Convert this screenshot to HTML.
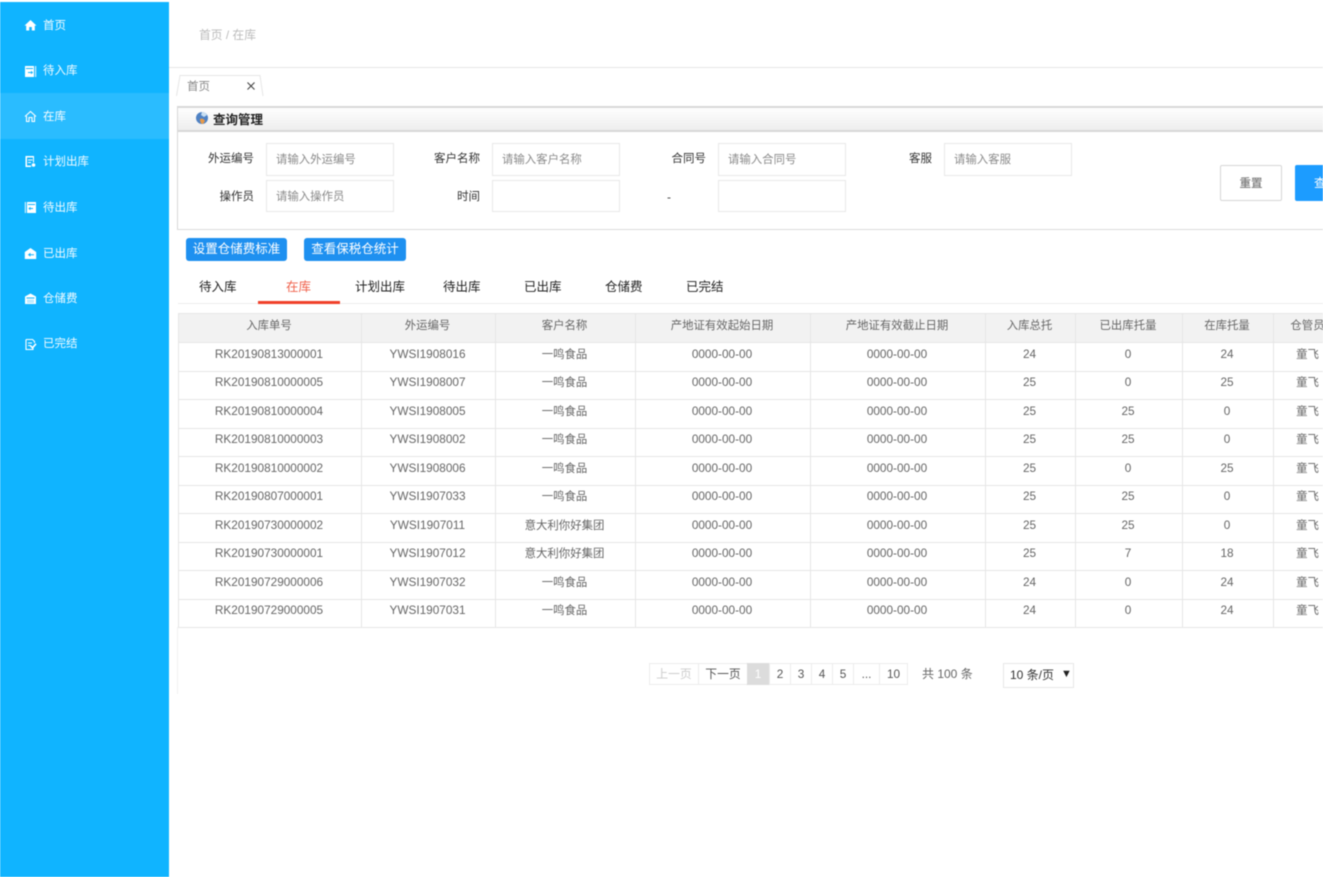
<!DOCTYPE html>
<html lang="zh">
<head>
<meta charset="utf-8">
<title>在库</title>
<style>
html,body{margin:0;padding:0;background:#fff}
body{width:1323px;height:877px;overflow:hidden;position:relative;font-family:"Liberation Sans","Noto Sans CJK SC",sans-serif;font-size:12px;color:#666}
#w{position:absolute;left:0;top:0;width:1323px;height:877px;overflow:hidden;filter:blur(.4px)}
.a{position:absolute;white-space:nowrap}
#side{position:absolute;left:0;top:2px;width:169px;height:875px;background:#10b4ff}
#act{position:absolute;left:0;top:93px;width:169px;height:46px;background:#2abcff}
.m{position:absolute;left:43px;color:#fff;font-size:11.5px;line-height:16px;opacity:.95;margin-top:1px}
.ic{position:absolute;left:24px;width:13px;height:13px}
.lab{position:absolute;color:#333;line-height:16px;text-align:right;font-size:11.5px}
.inp{position:absolute;box-sizing:border-box;width:128px;height:33px;border:1px solid #e8e8e8;color:#8a8a8a;line-height:32px;padding-left:9px;background:#fff;font-size:11.4px}
.tab{position:absolute;top:279px;color:#222;font-size:12.5px;line-height:16px}
table{position:absolute;left:178px;top:313px;border-collapse:collapse;table-layout:fixed;width:1165px;font-size:11.8px;color:#666}
td,th{border:1px solid #e6e6e6;text-align:center;font-weight:normal;overflow:hidden;white-space:nowrap;vertical-align:top;line-height:14px}
th{height:23px;padding:5px 2px 0 0;background:#f2f2f2;color:#666;font-size:11.4px}
td{height:24px;padding:3.5px 2px 0 0}
td:nth-child(3),td:nth-child(9){font-size:11.4px;padding-top:4.5px;height:23px}
.p{position:absolute;top:663px;height:22px;box-sizing:border-box;border:1px solid #ececec;text-align:center;line-height:20px;color:#555;background:#fff;font-size:11.8px}
</style>
</head>
<body>
<div id="w">
<div id="side"></div>
<div id="act"></div>

<svg class="ic" style="top:19px" viewBox="0 0 13 13"><path fill="#fff" d="M6.5 1 L12.5 6.6 L10.8 6.6 L10.8 11.5 L7.8 11.5 L7.8 8 L5.2 8 L5.2 11.5 L2.2 11.5 L2.2 6.6 L.5 6.6 Z"/></svg>
<div class="m" style="top:17px">首页</div>

<svg class="ic" style="top:65px" viewBox="0 0 13 13"><path fill="#fff" d="M1 1h9v11H1z"/><path fill="#10b4ff" d="M2 3h7v1H2zM4 7h3V5.8L9.2 7.5 7 9.2V8H4z"/><path fill="#cfefff" d="M11 1h1.2v11H11z"/></svg>
<div class="m" style="top:62px">待入库</div>

<svg class="ic" style="top:110px" viewBox="0 0 13 13"><path fill="none" stroke="#fff" stroke-width="1.1" d="M1 6.5 L6.5 1.5 L12 6.5 M2.5 6 V11.5 H5 V7.5 H8 V11.5 H10.5 V6"/></svg>
<div class="m" style="top:108px">在库</div>

<svg class="ic" style="top:155px" viewBox="0 0 13 13"><path fill="#fff" d="M1.5 1h8.5v6.5h-1V2.500H3V10.500h4V12H1.500z"/><path fill="#fff" d="M4 4.500h4.500v1H4zM4 7h3v1H4z"/><circle cx="9.500" cy="10" r="1.800" fill="#fff"/></svg>
<div class="m" style="top:153px">计划出库</div>

<svg class="ic" style="top:201px" viewBox="0 0 13 13"><path fill="#cfefff" d="M.8 1h1.200v11H.8z"/><path fill="#fff" d="M3 1h9v11H3z"/><path fill="#10b4ff" d="M4 3h7v1H4zM9 7H6.500V5.800L4.300 7.500 6.500 9.200V8H9z"/></svg>
<div class="m" style="top:199px">待出库</div>

<svg class="ic" style="top:247px" viewBox="0 0 13 13"><path fill="#fff" d="M6.500 1 L12.200 5 V12 H.8 V5 Z"/><path fill="#10b4ff" d="M10 7.200H6.500V5.800L3.800 7.700 6.500 9.600V8.200H10z"/></svg>
<div class="m" style="top:245px">已出库</div>

<svg class="ic" style="top:292px" viewBox="0 0 13 13"><path fill="#fff" d="M6.500 1.500 L12 4.500 V12 H1 V4.500 Z"/><path fill="#10b4ff" d="M2.500 5.500h8v1h-8z"/><path fill="#bfeaff" d="M3 7.500h7V11H3z"/></svg>
<div class="m" style="top:290px">仓储费</div>

<svg class="ic" style="top:338px" viewBox="0 0 13 13"><path fill="none" stroke="#fff" stroke-width="1.100" d="M2 1.500h6.500l2 2V5M2 1.500v10h7V10"/><path fill="#fff" d="M4 4.500h4v1H4zM4 7h3v1H4z"/><path fill="none" stroke="#fff" stroke-width="1.600" d="M6.500 7.800l2 2 3.500-4"/></svg>
<div class="m" style="top:335px">已完结</div>

<div class="a" style="left:199px;top:27px;color:#bbb;line-height:16px;font-size:11.8px">首页 / 在库</div>
<div class="a" style="left:169px;top:67px;width:1154px;height:1px;background:#e6e6e6"></div>

<svg class="a" style="left:175px;top:73px" width="92" height="24" viewBox="0 0 92 24"><path fill="none" stroke="#e6e6e6" d="M1.500 23 L5 2.500 H85 L88 23"/></svg>
<div class="a" style="left:187px;top:79px;color:#888;line-height:16px;font-size:11.5px">首页</div>
<svg class="a" style="left:246px;top:81px" width="10" height="10" viewBox="0 0 10 10"><path stroke="#444" stroke-width="1.100" d="M1.500 1.500l7 7M8.500 1.500l-7 7"/></svg>

<div class="a" style="left:177px;top:106px;width:1160px;height:124px;box-sizing:border-box;border:1px solid #d8d8d8;border-right:0;border-top-width:2px;border-bottom:1.500px solid #dcdcdc;background:#fff"></div>
<div class="a" style="left:178px;top:108px;width:1145px;height:22px;background:linear-gradient(#fefefe,#eeeeee);border-bottom:2px solid #d8d8d8"></div>
<svg class="a" style="left:195px;top:111px" width="14" height="14" viewBox="0 0 14 14"><circle cx="7" cy="7" r="6" fill="#4f82c4"/><path fill="#e79a4a" d="M5 8c2-1 4 0 5 2l-2 3c-2 0-3-2-3-5z"/><path fill="#c9dff2" d="M7 1c2 0 4 1 5 3L9 6 6 4z"/></svg>
<div class="a" style="left:213px;top:112px;color:#222;font-weight:bold;font-size:12.500px;line-height:16px">查询管理</div>

<div class="lab" style="left:190px;width:64px;top:151px">外运编号</div>
<div class="inp" style="left:266px;top:143px">请输入外运编号</div>
<div class="lab" style="left:416px;width:64px;top:151px">客户名称</div>
<div class="inp" style="left:492px;top:143px">请输入客户名称</div>
<div class="lab" style="left:642px;width:64px;top:151px">合同号</div>
<div class="inp" style="left:718px;top:143px">请输入合同号</div>
<div class="lab" style="left:868px;width:64px;top:151px">客服</div>
<div class="inp" style="left:944px;top:143px">请输入客服</div>

<div class="lab" style="left:190px;width:64px;top:189px">操作员</div>
<div class="inp" style="left:266px;top:180px;height:32px">请输入操作员</div>
<div class="lab" style="left:416px;width:64px;top:189px">时间</div>
<div class="inp" style="left:492px;top:180px;height:32px"></div>
<div class="a" style="left:667px;top:189px;color:#444;line-height:16px">-</div>
<div class="inp" style="left:718px;top:180px;height:32px"></div>

<div class="a" style="left:1220px;top:165px;width:62px;height:36px;box-sizing:border-box;border:1.500px solid #d6d6d6;border-radius:2px;text-align:center;line-height:36px;color:#888;font-weight:bold;font-size:11.5px">重置</div>
<div class="a" style="left:1295px;top:165px;width:62px;height:36px;background:#1c9cff;border-radius:2px;text-align:center;line-height:36px;color:#fff">查询</div>

<div class="a" style="left:186px;top:238px;width:101px;height:23px;background:#1e90f0;border-radius:3px;text-align:center;line-height:23px;color:#fff;font-size:12.500px">设置仓储费标准</div>
<div class="a" style="left:304px;top:238px;width:102px;height:23px;background:#1e90f0;border-radius:3px;text-align:center;line-height:23px;color:#fff;font-size:12.500px">查看保税仓统计</div>

<div class="tab" style="left:199px">待入库</div>
<div class="tab" style="left:286px;color:#f0604a">在库</div>
<div class="tab" style="left:355px">计划出库</div>
<div class="tab" style="left:443px">待出库</div>
<div class="tab" style="left:524px">已出库</div>
<div class="tab" style="left:605px">仓储费</div>
<div class="tab" style="left:686px">已完结</div>
<div class="a" style="left:178px;top:303px;width:1145px;height:1px;background:#ececec"></div>
<div class="a" style="left:258px;top:301px;width:82px;height:3px;background:#f0402a"></div>

<table>
<colgroup><col style="width:183px"><col style="width:134px"><col style="width:140px"><col style="width:175px"><col style="width:175px"><col style="width:90px"><col style="width:107px"><col style="width:91px"><col style="width:70px"></colgroup>
<tr><th>入库单号</th><th>外运编号</th><th>客户名称</th><th>产地证有效起始日期</th><th>产地证有效截止日期</th><th>入库总托</th><th>已出库托量</th><th>在库托量</th><th>仓管员</th></tr>
<tr><td>RK20190813000001</td><td>YWSI1908016</td><td>一鸣食品</td><td>0000-00-00</td><td>0000-00-00</td><td>24</td><td>0</td><td>24</td><td>童飞</td></tr>
<tr><td>RK20190810000005</td><td>YWSI1908007</td><td>一鸣食品</td><td>0000-00-00</td><td>0000-00-00</td><td>25</td><td>0</td><td>25</td><td>童飞</td></tr>
<tr><td>RK20190810000004</td><td>YWSI1908005</td><td>一鸣食品</td><td>0000-00-00</td><td>0000-00-00</td><td>25</td><td>25</td><td>0</td><td>童飞</td></tr>
<tr><td>RK20190810000003</td><td>YWSI1908002</td><td>一鸣食品</td><td>0000-00-00</td><td>0000-00-00</td><td>25</td><td>25</td><td>0</td><td>童飞</td></tr>
<tr><td>RK20190810000002</td><td>YWSI1908006</td><td>一鸣食品</td><td>0000-00-00</td><td>0000-00-00</td><td>25</td><td>0</td><td>25</td><td>童飞</td></tr>
<tr><td>RK20190807000001</td><td>YWSI1907033</td><td>一鸣食品</td><td>0000-00-00</td><td>0000-00-00</td><td>25</td><td>25</td><td>0</td><td>童飞</td></tr>
<tr><td>RK20190730000002</td><td>YWSI1907011</td><td>意大利你好集团</td><td>0000-00-00</td><td>0000-00-00</td><td>25</td><td>25</td><td>0</td><td>童飞</td></tr>
<tr><td>RK20190730000001</td><td>YWSI1907012</td><td>意大利你好集团</td><td>0000-00-00</td><td>0000-00-00</td><td>25</td><td>7</td><td>18</td><td>童飞</td></tr>
<tr><td>RK20190729000006</td><td>YWSI1907032</td><td>一鸣食品</td><td>0000-00-00</td><td>0000-00-00</td><td>24</td><td>0</td><td>24</td><td>童飞</td></tr>
<tr><td>RK20190729000005</td><td>YWSI1907031</td><td>一鸣食品</td><td>0000-00-00</td><td>0000-00-00</td><td>24</td><td>0</td><td>24</td><td>童飞</td></tr>
</table>

<div class="a" style="left:177px;top:627px;width:1px;height:67px;background:#f2f2f2"></div>

<div class="p" style="left:649px;width:50px;color:#ccc">上一页</div>
<div class="p" style="left:698px;width:50px">下一页</div>
<div class="p" style="left:747px;width:22px;background:#dcdcdc;color:#fff;border-color:#dcdcdc">1</div>
<div class="p" style="left:769px;width:22px">2</div>
<div class="p" style="left:790px;width:22px">3</div>
<div class="p" style="left:811px;width:22px">4</div>
<div class="p" style="left:832px;width:22px">5</div>
<div class="p" style="left:853px;width:27px">...</div>
<div class="p" style="left:879px;width:29px">10</div>
<div class="a" style="left:922px;top:666px;color:#666;line-height:16px">共 100 条</div>
<div class="a" style="left:1003px;top:663px;width:71px;height:25px;box-sizing:border-box;border:1px solid #e8e8e8;line-height:23px;padding-left:6px;color:#333">10 条/页</div>
<div class="a" style="left:1061px;top:668px;color:#222;font-size:11px;line-height:12px">▼</div>
</div>
</body>
</html>
